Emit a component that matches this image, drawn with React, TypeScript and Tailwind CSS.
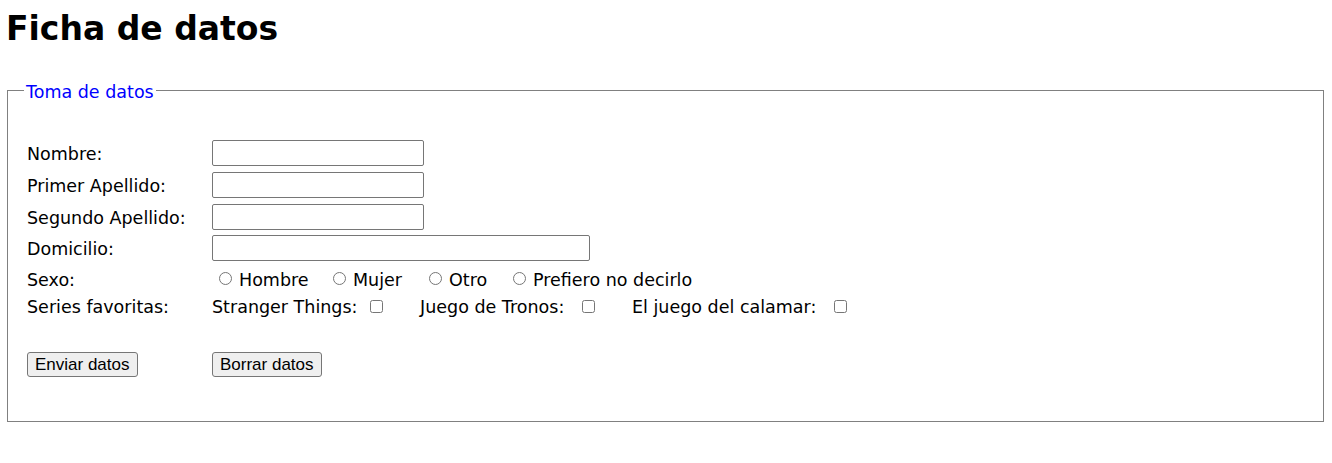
import type { ReactNode } from "react";

function Row({ label, h, children }: { label: string; h: string; children?: ReactNode }) {
  return (
    <div className={`flex items-center ${h}`}>
      <span className="mt-[2px] w-[185px] shrink-0">{label}</span>
      <div className="flex items-center">{children}</div>
    </div>
  );
}

const field = "h-[26px] rounded-[2px] border border-[#767676] bg-white px-[2px]";
const btn =
  "flex h-[25px] items-center rounded-[3px] border border-[#767676] bg-[#efefef] px-[7px] font-['Liberation_Sans',Arial,sans-serif] text-[17px] text-black";
const radio = "m-0 ml-[7px] mr-[7px] h-[13px] w-[13px]";
const check = "m-0 mt-[2px] h-[13px] w-[13px]";

export default function App() {
  return (
    <main className="min-h-screen bg-white pl-[7px] pr-[8px] font-['DejaVu_Sans',sans-serif] text-[17.5px] leading-[22px] text-black">
      <h1 className="ml-[-1px] mt-[9px] h-[40px] text-[33px] font-bold leading-[40px]">Ficha de datos</h1>

      <fieldset className="mt-[28px] border border-[#808080] pb-[44px] pl-[19px] pr-[19px] pt-[34px]">
        <legend className="-ml-[3px] px-[2px] pt-[4px] text-[#0000ff]">Toma de datos</legend>

        <Row label="Nombre:" h="h-[32px]">
          <input type="text" className={`${field} w-[212px]`} />
        </Row>
        <Row label="Primer Apellido:" h="h-[32px]">
          <input type="text" className={`${field} w-[212px]`} />
        </Row>
        <Row label="Segundo Apellido:" h="h-[32px]">
          <input type="text" className={`${field} w-[212px]`} />
        </Row>
        <Row label="Domicilio:" h="h-[30px]">
          <input type="text" className={`${field} w-[378px]`} />
        </Row>
        <Row label="Sexo:" h="h-[31px]">
          <label className="flex w-[114px] items-center">
            <input type="radio" name="sexo" className={radio} />
            <span className="mt-[2px]">Hombre</span>
          </label>
          <label className="flex w-[96px] items-center">
            <input type="radio" name="sexo" className={radio} />
            <span className="mt-[2px]">Mujer</span>
          </label>
          <label className="flex w-[84px] items-center">
            <input type="radio" name="sexo" className={radio} />
            <span className="mt-[2px]">Otro</span>
          </label>
          <label className="flex items-center">
            <input type="radio" name="sexo" className={radio} />
            <span className="mt-[2px]">Prefiero no decirlo</span>
          </label>
        </Row>
        <Row label="Series favoritas:" h="h-[23px]">
          <label className="flex w-[208px] items-center">
            <span className="mt-[2px] w-[158px]">Stranger Things:</span>
            <input type="checkbox" className={check} />
          </label>
          <label className="flex w-[212px] items-center">
            <span className="mt-[2px] w-[162px]">Juego de Tronos:</span>
            <input type="checkbox" className={check} />
          </label>
          <label className="flex items-center">
            <span className="mt-[2px] w-[202px]">El juego del calamar:</span>
            <input type="checkbox" className={check} />
          </label>
        </Row>

        <div className="mt-[35px] flex">
          <div className="w-[185px]">
            <button type="submit" className={btn}>
              Enviar datos
            </button>
          </div>
          <button type="reset" className={btn}>
            Borrar datos
          </button>
        </div>
      </fieldset>
    </main>
  );
}
